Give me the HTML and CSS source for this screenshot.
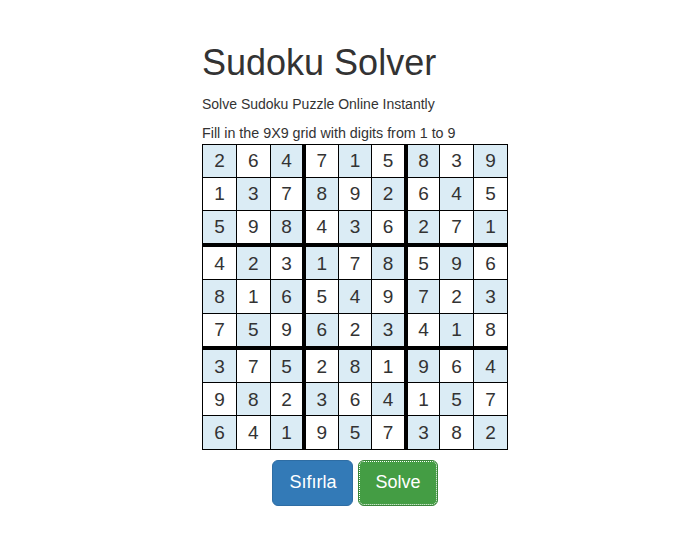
FILE: index.html
```html
<!DOCTYPE html>
<html>
<head>
<meta charset="utf-8">
<title>Sudoku Solver</title>
<link rel="stylesheet" href="styles.css">
</head>
<body>
<div class="page">
  <h1 class="title">Sudoku Solver</h1>
  <p class="subtitle">Solve Sudoku Puzzle Online Instantly</p>
  <p class="hint">Fill in the 9X9 grid with digits from 1 to 9</p>
  <table class="board">
    <tbody id="board"></tbody>
  </table>
  <div class="actions">
    <button class="btn btn-primary">Sıfırla</button>
    <button class="btn btn-success focused">Solve</button>
  </div>
</div>
<script>
var data = [
  [2,6,4,7,1,5,8,3,9],
  [1,3,7,8,9,2,6,4,5],
  [5,9,8,4,3,6,2,7,1],
  [4,2,3,1,7,8,5,9,6],
  [8,1,6,5,4,9,7,2,3],
  [7,5,9,6,2,3,4,1,8],
  [3,7,5,2,8,1,9,6,4],
  [9,8,2,3,6,4,1,5,7],
  [6,4,1,9,5,7,3,8,2]
];
var tb = document.getElementById('board');
data.forEach(function(row, r){
  var tr = document.createElement('tr');
  if (r === 2 || r === 5) tr.className = 'box-bottom';
  row.forEach(function(v, c){
    var td = document.createElement('td');
    var cls = [];
    if ((r + c) % 2 === 0) cls.push('shade');
    if (c === 2 || c === 5) cls.push('box-right');
    td.className = cls.join(' ');
    td.textContent = v;
    tr.appendChild(td);
  });
  tb.appendChild(tr);
});
</script>
</body>
</html>
```

FILE: styles.css
```css
html, body {
  margin: 0;
  padding: 0;
  background: #fff;
}
body {
  font-family: "Liberation Sans", Arial, Helvetica, sans-serif;
  font-size: 14px;
  line-height: 1.42857;
  color: #333;
}
.page {
  width: 306px;
  margin-left: 202px;
  padding-top: 1px;
}
.title {
  font-size: 36px;
  font-weight: 500;
  line-height: 1.1;
  margin: 42px 0 12px;
}
.subtitle {
  margin: 0 0 9px;
}
.hint {
  margin: 0 0 2px;
  line-height: 18px;
  font-size: 14.3px;
}
.board {
  border-collapse: collapse;
  border: 1px solid #000;
  width: 306px;
  height: 306px;
  table-layout: fixed;
}
.board td {
  padding: 0;
  border: 1px solid #000;
  text-align: center;
  vertical-align: middle;
  font-size: 19px;
  color: #333;
  background: #fff;
}
.board td.shade {
  background: #dbecf5;
}
.board td.box-right {
  border-right-width: 4px;
}
.board tr.box-bottom td {
  border-bottom-width: 4px;
}
.actions {
  display: flex;
  justify-content: center;
  gap: 5px;
  margin-top: 10px;
}
.btn {
  font-family: inherit;
  font-size: 18px;
  line-height: 1.3333;
  padding: 10px 16px;
  border-radius: 6px;
  border: 1px solid transparent;
  color: #fff;
  cursor: pointer;
}
.btn-primary {
  background: #337ab7;
  border-color: #2e6da4;
}
.btn-success {
  background: #449d44;
  border-color: #398439;
}
.btn-success.focused {
  outline: 1px dotted #fff;
  outline-offset: -2px;
}
```
